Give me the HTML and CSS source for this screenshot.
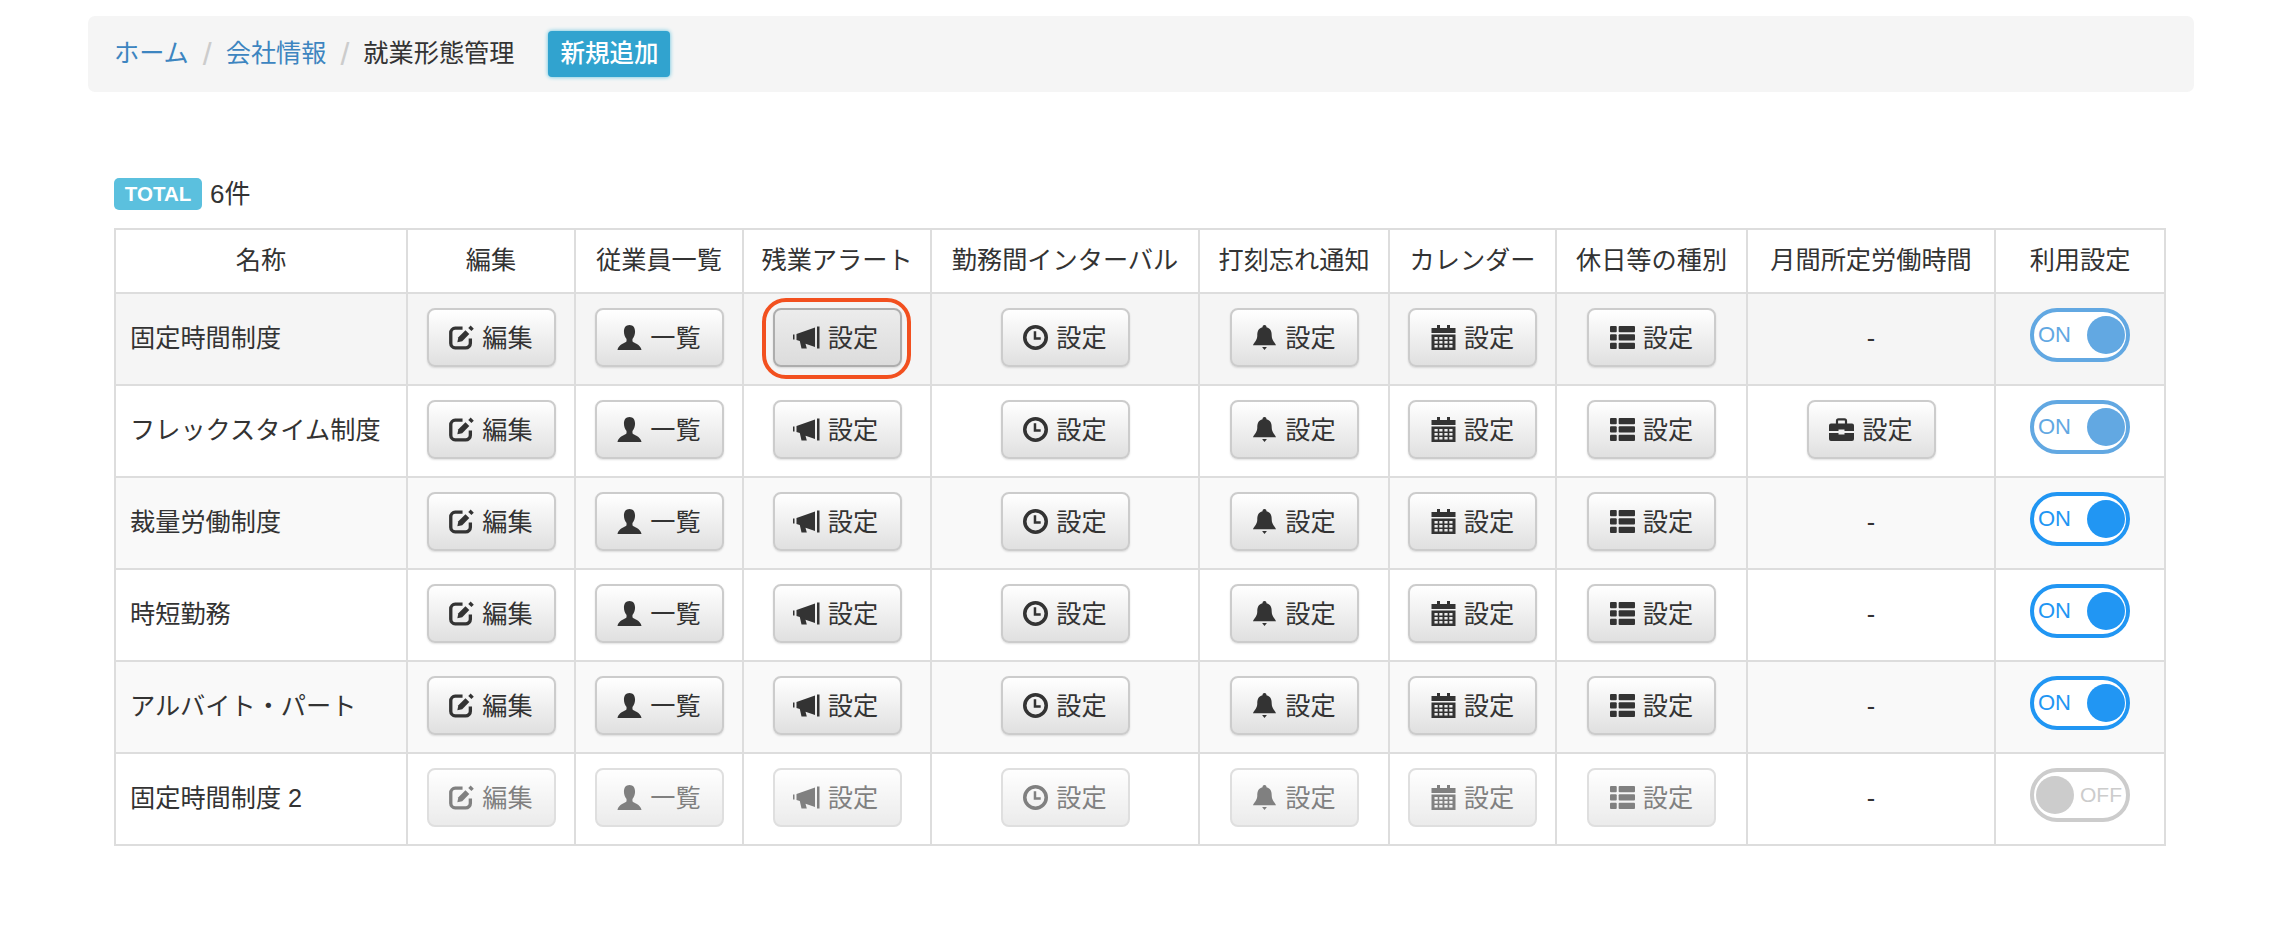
FILE: index.html
```html
<!DOCTYPE html>
<html lang="ja">
<head>
<meta charset="utf-8">
<title>就業形態管理</title>
<link rel="stylesheet" href="styles.css">
</head>
<body>
<svg class="defs" xmlns="http://www.w3.org/2000/svg">
  <symbol id="i-edit" viewBox="0 0 24 24"><path d="M13 3H6A4.500 4.500 0 0 0 1.700 7.500v10A4.500 4.500 0 0 0 6 22h10a4.500 4.500 0 0 0 4.500-4.500V13" fill="none" stroke="currentColor" stroke-width="3.200"/><path d="M8 16.500l1-4.700L15.800 5l3.700 3.700-6.800 6.800z" fill="currentColor"/><path d="M20.800 .5l3 3-2.300 2.300-3-3z" fill="currentColor"/></symbol>
  <symbol id="i-user" viewBox="0 0 26 27"><path d="M13 0C9 0 7 3 7 7c0 3.300 1.200 6 2.800 8v2.500C9 19.500 1 20.500 0 27h26c-1-6.500-9-7.500-9.800-9.500V15C17.800 13 19 10.300 19 7c0-4-2-7-6-7z" fill="currentColor"/></symbol>
  <symbol id="i-horn" viewBox="0 0 27 24"><path d="M0 9h1.500v5H0zM24 1h2.500v22H24z" fill="currentColor"/><path d="M3.500 8.500 22 2v19.500l-9.500-3.300 1.300 4.800H8.500L6.800 15.500 3.500 14.500z" fill="currentColor"/></symbol>
  <symbol id="i-time" viewBox="0 0 24 24"><circle cx="12" cy="12" r="10.300" fill="none" stroke="currentColor" stroke-width="3.400"/><path d="M11.500 6v7h5.500" fill="none" stroke="currentColor" stroke-width="2.400"/></symbol>
  <symbol id="i-bell" viewBox="0 0 24 26"><path d="M12 0a2 2 0 0 1 2 2.300c4.500 1 5.500 4.500 5.500 8.700 0 5 3.500 7.500 4.500 10H0c1-2.500 4.500-5 4.500-10 0-4.200 1-7.700 5.500-8.700A2 2 0 0 1 12 0z" fill="currentColor"/><path d="M9.500 23h5L12 26z" fill="currentColor"/></symbol>
  <symbol id="i-cal" viewBox="0 0 24 25"><path d="M5.500 0H8.500v4h-3zM15.500 0h3v4h-3zM0 3h24v5H0z" fill="currentColor"/><path fill-rule="evenodd" d="M0 9.500h24V25H0zM3 12h3.200v2.500H3zM7.800 12H11v2.500H7.800zM12.900 12h3.200v2.500h-3.200zM17.800 12H21v2.500h-3.200zM3 16h3.200v2.500H3zM7.800 16H11v2.500H7.800zM12.900 16h3.200v2.500h-3.200zM17.800 16H21v2.500h-3.200zM3 20h3.200v2.500H3zM7.800 20H11v2.500H7.800zM12.900 20h3.200v2.500h-3.200zM17.800 20H21v2.500h-3.200z" fill="currentColor"/></symbol>
  <symbol id="i-list" viewBox="0 0 26 24"><g fill="currentColor"><rect x="0" y="0" width="7" height="6.500" rx="1"/><rect x="9" y="0" width="17" height="6.500" rx="1"/><rect x="0" y="8.700" width="7" height="6.500" rx="1"/><rect x="9" y="8.700" width="17" height="6.500" rx="1"/><rect x="0" y="17.500" width="7" height="6.500" rx="1"/><rect x="9" y="17.500" width="17" height="6.500" rx="1"/></g></symbol>
  <symbol id="i-case" viewBox="0 0 25 23"><path d="M8 6V2.800A1.500 1.500 0 0 1 9.500 1.300h6A1.500 1.500 0 0 1 17 2.800V6" fill="none" stroke="currentColor" stroke-width="2.200"/><path d="M2 5.500h21a2 2 0 0 1 2 2V13H15.500v-1.500h-6V13H0V7.500a2 2 0 0 1 2-2zM0 15h9.500v1.500h6V15H25v6a2 2 0 0 1-2 2H2a2 2 0 0 1-2-2z" fill="currentColor"/></symbol>
</svg>

<nav class="crumb">
  <a class="crumb-link" href="#">ホーム</a>
  <span class="crumb-sep">/</span>
  <a class="crumb-link" href="#">会社情報</a>
  <span class="crumb-sep">/</span>
  <span class="crumb-here">就業形態管理</span>
  <a class="btn-add" href="#">新規追加</a>
</nav>

<main class="content">
  <p class="total"><span class="total-badge">TOTAL</span><span>6件</span></p>
  <table class="grid">
    <colgroup>
      <col class="c-name"><col class="c-s"><col class="c-s"><col class="c-alert"><col class="c-int"><col class="c-punch"><col class="c-cal"><col class="c-kind"><col class="c-month"><col class="c-use">
    </colgroup>
    <thead>
      <tr><th>名称</th><th>編集</th><th>従業員一覧</th><th>残業アラート</th><th>勤務間インターバル</th><th>打刻忘れ通知</th><th>カレンダー</th><th>休日等の種別</th><th>月間所定労働時間</th><th>利用設定</th></tr>
    </thead>
    <tbody>
      <tr class="row-hover">
        <td class="name">固定時間制度</td>
        <td><a class="btn"><svg class="ic"><use href="#i-edit"/></svg>編集</a></td>
        <td><a class="btn"><svg class="ic"><use href="#i-user"/></svg>一覧</a></td>
        <td><span class="ring"><a class="btn btn-on"><svg class="ic ic-horn"><use href="#i-horn"/></svg>設定</a></span></td>
        <td><a class="btn"><svg class="ic"><use href="#i-time"/></svg>設定</a></td>
        <td><a class="btn"><svg class="ic"><use href="#i-bell"/></svg>設定</a></td>
        <td><a class="btn"><svg class="ic"><use href="#i-cal"/></svg>設定</a></td>
        <td><a class="btn"><svg class="ic"><use href="#i-list"/></svg>設定</a></td>
        <td>-</td>
        <td><span class="toggle toggle-soft"><span class="toggle-label">ON</span><i class="knob"></i></span></td>
      </tr>
      <tr>
        <td class="name">フレックスタイム制度</td>
        <td><a class="btn"><svg class="ic"><use href="#i-edit"/></svg>編集</a></td>
        <td><a class="btn"><svg class="ic"><use href="#i-user"/></svg>一覧</a></td>
        <td><a class="btn"><svg class="ic ic-horn"><use href="#i-horn"/></svg>設定</a></td>
        <td><a class="btn"><svg class="ic"><use href="#i-time"/></svg>設定</a></td>
        <td><a class="btn"><svg class="ic"><use href="#i-bell"/></svg>設定</a></td>
        <td><a class="btn"><svg class="ic"><use href="#i-cal"/></svg>設定</a></td>
        <td><a class="btn"><svg class="ic"><use href="#i-list"/></svg>設定</a></td>
        <td><a class="btn"><svg class="ic"><use href="#i-case"/></svg>設定</a></td>
        <td><span class="toggle toggle-soft"><span class="toggle-label">ON</span><i class="knob"></i></span></td>
      </tr>
      <tr class="row-odd">
        <td class="name">裁量労働制度</td>
        <td><a class="btn"><svg class="ic"><use href="#i-edit"/></svg>編集</a></td>
        <td><a class="btn"><svg class="ic"><use href="#i-user"/></svg>一覧</a></td>
        <td><a class="btn"><svg class="ic ic-horn"><use href="#i-horn"/></svg>設定</a></td>
        <td><a class="btn"><svg class="ic"><use href="#i-time"/></svg>設定</a></td>
        <td><a class="btn"><svg class="ic"><use href="#i-bell"/></svg>設定</a></td>
        <td><a class="btn"><svg class="ic"><use href="#i-cal"/></svg>設定</a></td>
        <td><a class="btn"><svg class="ic"><use href="#i-list"/></svg>設定</a></td>
        <td>-</td>
        <td><span class="toggle"><span class="toggle-label">ON</span><i class="knob"></i></span></td>
      </tr>
      <tr>
        <td class="name">時短勤務</td>
        <td><a class="btn"><svg class="ic"><use href="#i-edit"/></svg>編集</a></td>
        <td><a class="btn"><svg class="ic"><use href="#i-user"/></svg>一覧</a></td>
        <td><a class="btn"><svg class="ic ic-horn"><use href="#i-horn"/></svg>設定</a></td>
        <td><a class="btn"><svg class="ic"><use href="#i-time"/></svg>設定</a></td>
        <td><a class="btn"><svg class="ic"><use href="#i-bell"/></svg>設定</a></td>
        <td><a class="btn"><svg class="ic"><use href="#i-cal"/></svg>設定</a></td>
        <td><a class="btn"><svg class="ic"><use href="#i-list"/></svg>設定</a></td>
        <td>-</td>
        <td><span class="toggle"><span class="toggle-label">ON</span><i class="knob"></i></span></td>
      </tr>
      <tr class="row-odd">
        <td class="name">アルバイト・パート</td>
        <td><a class="btn"><svg class="ic"><use href="#i-edit"/></svg>編集</a></td>
        <td><a class="btn"><svg class="ic"><use href="#i-user"/></svg>一覧</a></td>
        <td><a class="btn"><svg class="ic ic-horn"><use href="#i-horn"/></svg>設定</a></td>
        <td><a class="btn"><svg class="ic"><use href="#i-time"/></svg>設定</a></td>
        <td><a class="btn"><svg class="ic"><use href="#i-bell"/></svg>設定</a></td>
        <td><a class="btn"><svg class="ic"><use href="#i-cal"/></svg>設定</a></td>
        <td><a class="btn"><svg class="ic"><use href="#i-list"/></svg>設定</a></td>
        <td>-</td>
        <td><span class="toggle"><span class="toggle-label">ON</span><i class="knob"></i></span></td>
      </tr>
      <tr>
        <td class="name">固定時間制度 2</td>
        <td><a class="btn btn-off"><svg class="ic"><use href="#i-edit"/></svg>編集</a></td>
        <td><a class="btn btn-off"><svg class="ic"><use href="#i-user"/></svg>一覧</a></td>
        <td><a class="btn btn-off"><svg class="ic ic-horn"><use href="#i-horn"/></svg>設定</a></td>
        <td><a class="btn btn-off"><svg class="ic"><use href="#i-time"/></svg>設定</a></td>
        <td><a class="btn btn-off"><svg class="ic"><use href="#i-bell"/></svg>設定</a></td>
        <td><a class="btn btn-off"><svg class="ic"><use href="#i-cal"/></svg>設定</a></td>
        <td><a class="btn btn-off"><svg class="ic"><use href="#i-list"/></svg>設定</a></td>
        <td>-</td>
        <td><span class="toggle toggle-off"><i class="knob"></i><span class="toggle-label">OFF</span></span></td>
      </tr>
    </tbody>
  </table>
</main>
</body>
</html>
```

FILE: styles.css
```css
* { box-sizing: border-box; }

html, body { margin: 0; }

body {
  padding: 16px 96px 0 88px;
  background: #fff;
  color: #333;
  font-family: "Liberation Sans", "Noto Sans CJK JP", sans-serif;
  font-size: 25.2px;
  line-height: 1.4;
}

.defs { display: none; }

.crumb {
  display: flex;
  align-items: center;
  height: 76px;
  padding: 0 26px;
  background: #f5f5f5;
  border-radius: 7px;
}

.crumb-link { color: #3d85c0; text-decoration: none; }
.crumb-sep { margin: 0 14px; color: #ccc; font-size: 32px; line-height: 1; }
.crumb-here { color: #333; }

.btn-add {
  display: flex;
  align-items: center;
  justify-content: center;
  width: 122px;
  height: 46px;
  margin-left: 34px;
  background: #31a3cf;
  border-radius: 4px;
  box-shadow: 0 0 4px #5bc0de;
  color: #fff;
  font-size: 24.5px;
  font-weight: 500;
  text-decoration: none;
}

.content { padding: 0 30px 0 26px; }

.total {
  display: flex;
  align-items: center;
  gap: 8px;
  height: 34px;
  margin: 85px 0 17px;
  font-size: 26px;
  line-height: 1;
}

.total-badge {
  display: flex;
  align-items: center;
  justify-content: center;
  width: 88px;
  height: 32px;
  background: #5bc0de;
  border-radius: 5px;
  color: #fff;
  font-size: 20.500px;
  font-weight: 700;
}

.grid {
  width: 100%;
  table-layout: fixed;
  border-collapse: collapse;
}

.c-name { width: 292px; }
.c-s { width: 168px; }
.c-alert { width: 188px; }
.c-int { width: 268px; }
.c-punch { width: 190px; }
.c-cal { width: 167px; }
.c-kind { width: 191px; }
.c-month { width: 248px; }
.c-use { width: 170px; }

.grid th,
.grid td {
  padding: 0;
  border: 2px solid #ddd;
  text-align: center;
  vertical-align: middle;
  white-space: nowrap;
}

.grid th { height: 64px; font-weight: 400; }
.grid td { height: 92px; }
.grid td.name { padding-left: 14px; text-align: left; }

.row-hover td { background: #f5f5f5; }
.row-odd td { background: #f9f9f9; }

.btn {
  display: inline-flex;
  align-items: center;
  justify-content: center;
  gap: 8px;
  width: 129px;
  height: 59px;
  margin-bottom: 3px;
  padding-top: 3px;
  background: linear-gradient(#fff, #e0e0e0);
  border: 2px solid #ccc;
  border-radius: 8px;
  box-shadow: 0 1px 2px rgba(0, 0, 0, .12);
  color: #333;
  vertical-align: middle;
}

.btn-on {
  background: linear-gradient(#ececec, #dcdcdc);
  border-color: #adadad;
}

.btn-off { opacity: .62; box-shadow: none; }

.ic { width: 25px; height: 25px; margin-top: -3px; flex: none; }
.ic-horn { width: 27px; margin-left: -3px; }

.ring {
  position: relative;
  display: inline-block;
}

.ring::after {
  content: "";
  position: absolute;
  inset: -10px -9px -9px -11px;
  border: 4px solid #f2501f;
  border-radius: 24px;
}

.toggle {
  display: inline-flex;
  align-items: center;
  justify-content: space-between;
  width: 100px;
  height: 54px;
  margin-bottom: 9px;
  padding: 0 1px 0 4px;
  background: #fff;
  border: 4px solid #2196f3;
  border-radius: 27px;
  color: #2196f3;
  font-size: 22px;
  line-height: 1;
  vertical-align: middle;
}

.knob {
  width: 38px;
  height: 38px;
  background: #2196f3;
  border-radius: 50%;
}

.toggle-soft { border-color: #62a8e2; color: #62a8e2; }
.toggle-soft .knob { background: #62a8e2; }

.toggle-off {
  padding: 0 4px 0 2px;
  border-color: #ccc;
  color: #ccc;
  font-size: 21px;
}
.toggle-off .knob { background: #ccc; }
```
